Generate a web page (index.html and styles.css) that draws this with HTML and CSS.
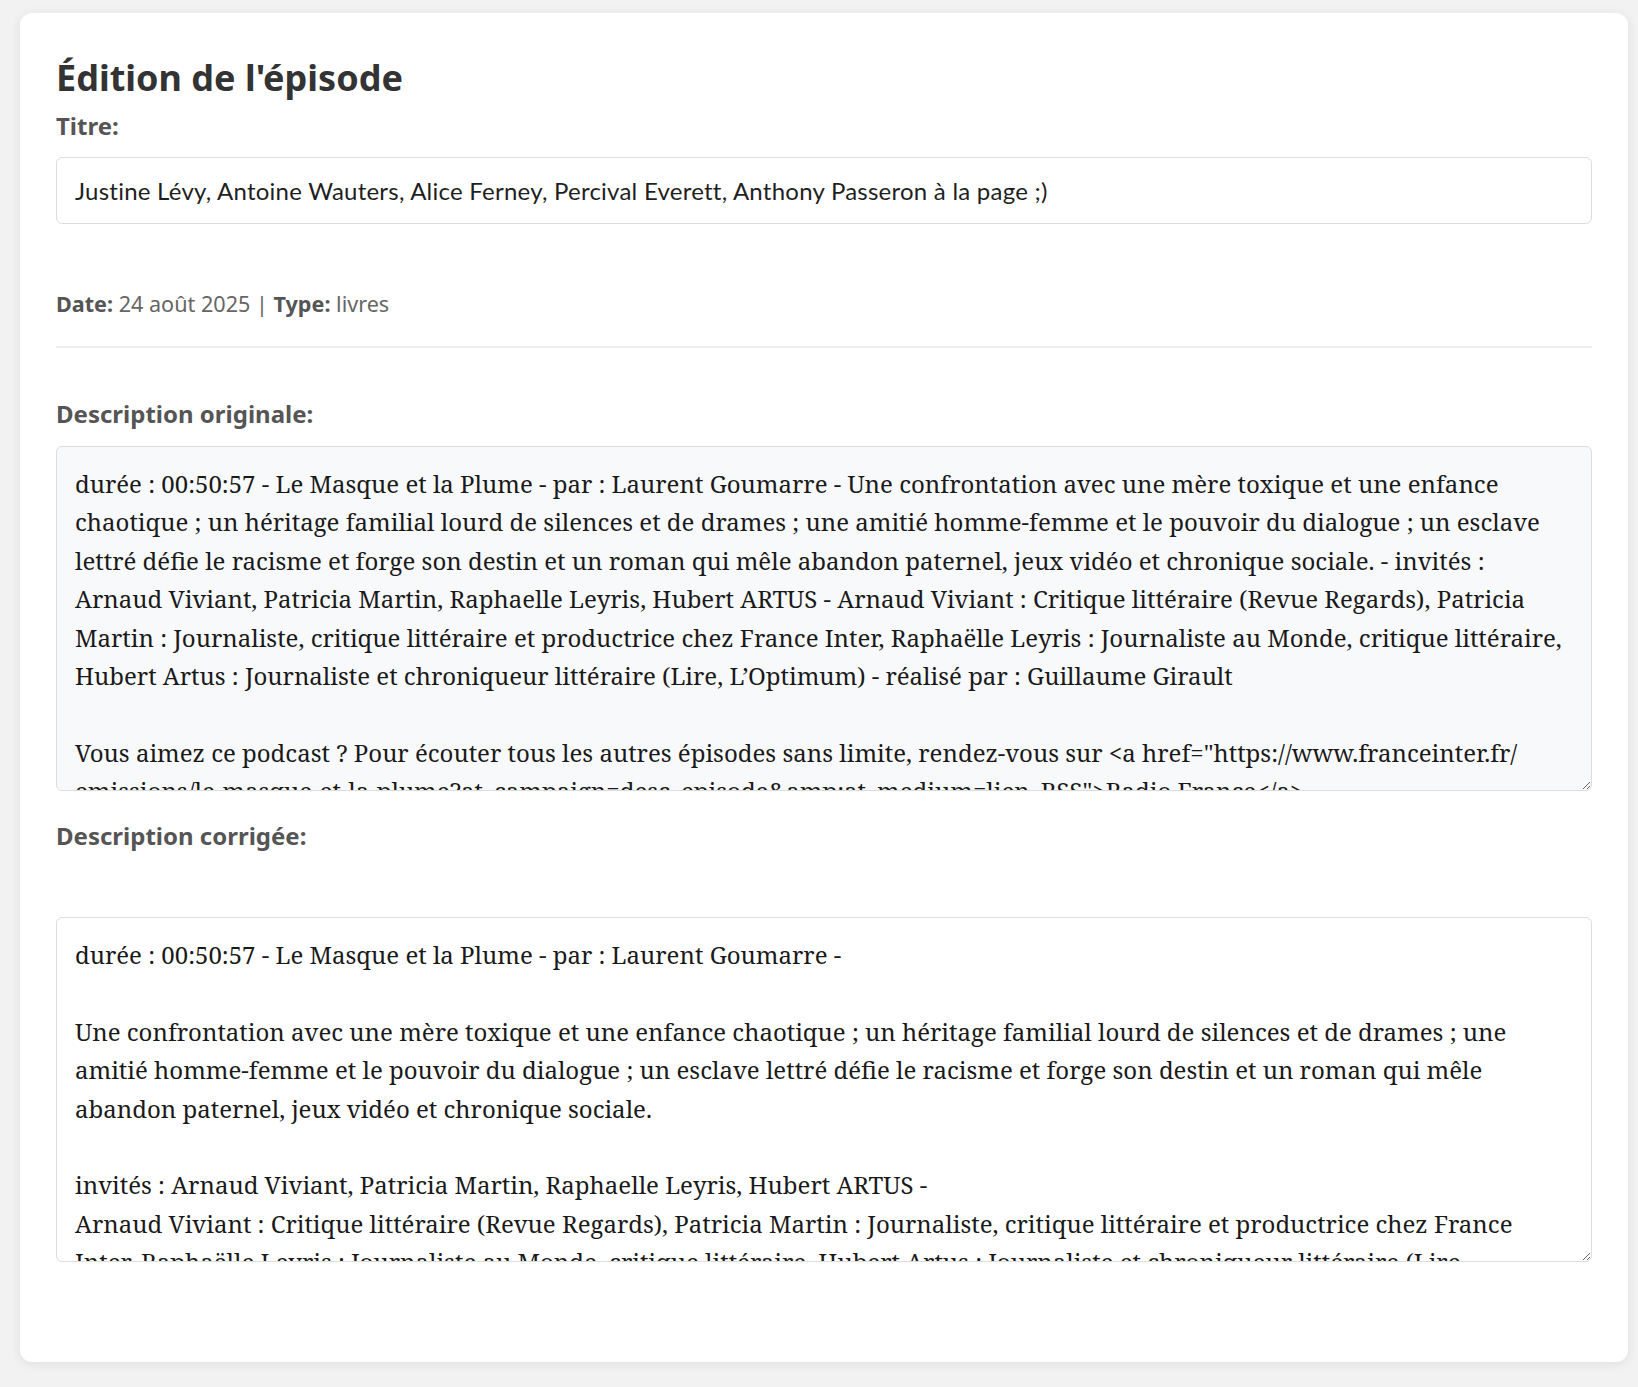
FILE: index.html
```html
<!DOCTYPE html>
<html lang="fr">
<head>
<meta charset="utf-8">
<title>Édition de l'épisode</title>
<link rel="stylesheet" href="styles.css">
</head>
<body>
<div class="card">
  <h2 class="page-title">Édition de l'épisode</h2>
  <label class="field-label" for="titre">Titre:</label>
  <input id="titre" class="title-input" type="text" value="Justine Lévy, Antoine Wauters, Alice Ferney, Percival Everett, Anthony Passeron à la page ;)">
  <div class="meta"><strong>Date:</strong> 24 août 2025 | <strong>Type:</strong> livres</div>
  <label class="field-label section-label" for="orig">Description originale:</label>
  <textarea id="orig" class="desc desc-original" readonly>durée : 00:50:57 - Le Masque et la Plume - par : Laurent Goumarre - Une confrontation avec une mère toxique et une enfance chaotique ; un héritage familial lourd de silences et de drames ; une amitié homme-femme et le pouvoir du dialogue ; un esclave lettré défie le racisme et forge son destin et un roman qui mêle abandon paternel, jeux vidéo et chronique sociale. - invités : Arnaud Viviant, Patricia Martin, Raphaelle Leyris, Hubert ARTUS - Arnaud Viviant : Critique littéraire (Revue Regards), Patricia Martin : Journaliste, critique littéraire et productrice chez France Inter, Raphaëlle Leyris : Journaliste au Monde, critique littéraire, Hubert Artus : Journaliste et chroniqueur littéraire (Lire, L’Optimum) - réalisé par : Guillaume Girault

Vous aimez ce podcast ? Pour écouter tous les autres épisodes sans limite, rendez-vous sur &lt;a href="https://www.franceinter.fr/&#8203;emissions/le-masque-et-la-plume?at_campaign=desc_episode&amp;amp;at_medium=lien_RSS"&gt;Radio France&lt;/a&gt;.</textarea>
  <label class="field-label corr-label" for="corr">Description corrigée:</label>
  <div class="corr-spacer"></div>
  <textarea id="corr" class="desc desc-corrected">durée : 00:50:57 - Le Masque et la Plume - par : Laurent Goumarre -

Une confrontation avec une mère toxique et une enfance chaotique ; un héritage familial lourd de silences et de drames ; une amitié homme-femme et le pouvoir du dialogue ; un esclave lettré défie le racisme et forge son destin et un roman qui mêle abandon paternel, jeux vidéo et chronique sociale.

invités : Arnaud Viviant, Patricia Martin, Raphaelle Leyris, Hubert ARTUS -
Arnaud Viviant : Critique littéraire (Revue Regards), Patricia Martin : Journaliste, critique littéraire et productrice chez France Inter, Raphaëlle Leyris : Journaliste au Monde, critique littéraire, Hubert Artus : Journaliste et chroniqueur littéraire (Lire, L’Optimum) -

réalisé par : Guillaume Girault</textarea>
</div>
</body>
</html>
```

FILE: styles.css
```css
* {
  box-sizing: border-box;
}

html, body {
  margin: 0;
  background: #f2f2f2;
}

body {
  padding: 13px 10px 25px 20px;
  font-family: "Noto Sans", "Open Sans", sans-serif;
  color: #333;
}

.card {
  background: #fff;
  border-radius: 12px;
  box-shadow: 0 2px 12px rgba(0, 0, 0, 0.08);
  padding: 40px 36px 100px;
  display: flex;
  flex-direction: column;
}

.page-title {
  margin: 0 0 7px;
  font-size: 36px;
  line-height: 49px;
  font-weight: 700;
  color: #333;
}

.field-label {
  display: block;
  font-size: 24px;
  line-height: 33px;
  font-weight: 700;
  color: #555;
}

.title-input {
  display: block;
  width: 100%;
  margin-top: 15px;
  height: 67px;
  padding: 0 18px;
  border: 1px solid #ddd;
  border-radius: 6px;
  background: #fff;
  font-family: Lato, "Noto Sans", sans-serif;
  font-size: 24px;
  letter-spacing: 0.24px;
  color: #1f1f1f;
  outline: none;
}

.meta {
  margin-top: 63px;
  padding-bottom: 26px;
  border-bottom: 2px solid #eee;
  font-size: 21.6px;
  line-height: 33px;
  color: #666;
}

.meta strong {
  color: #555;
  font-weight: 700;
}

.section-label {
  margin-top: 49px;
}

.desc {
  display: block;
  width: 100%;
  height: 345px;
  margin: 16px 0 0;
  padding: 18px;
  border: 1px solid #ddd;
  border-radius: 6px;
  font-family: "Noto Serif", "DejaVu Serif Condensed", "DejaVu Serif", serif;
  font-size: 24px;
  line-height: 38.4px;
  color: #1a1a1a;
  resize: vertical;
  overflow: hidden;
  outline: none;
}

.desc-original {
  background: #f8f9fa;
}

.desc-corrected {
  background: #fff;
  margin-top: 0;
}

.corr-label {
  margin-top: 28px;
}

.corr-spacer {
  height: 65px;
}
```
